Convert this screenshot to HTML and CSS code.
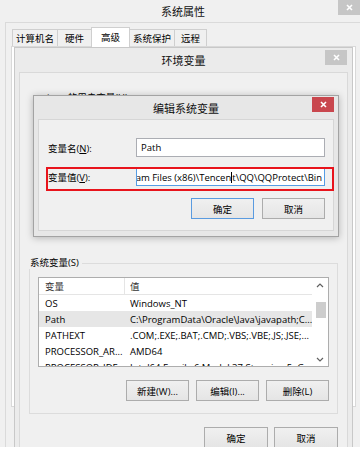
FILE: index.html
```html
<!DOCTYPE html>
<html lang="zh-CN">
<head>
    <meta charset="UTF-8">
    <title>系统属性</title>
    <link rel="stylesheet" href="styles.css">
</head>
<body>
<div class="sys-window">
    <div class="titlebar">
        <span class="title">系统属性</span>
        <span class="close sys-close"><svg width="7" height="7" viewBox="0 0 7 7"><path d="M1 1L6 6M6 1L1 6" stroke="#fff" stroke-width="1.6"/></svg></span>
    </div>
    <div class="sys-client">
        <div class="tabs">
            <div class="tab w45">计算机名</div>
            <div class="tab w35">硬件</div>
            <div class="tab active">高级</div>
            <div class="tab w46">系统保护</div>
            <div class="tab w33">远程</div>
        </div>
        <div class="tab-panel"></div>
    </div>

    <!-- 环境变量 -->
    <div class="env-dialog">
        <div class="dlg-title">
            <span class="title">环境变量</span>
            <span class="close env-close"><svg width="7" height="7" viewBox="0 0 7 7"><path d="M1 1L6 6M6 1L1 6" stroke="#fff" stroke-width="1.6"/></svg></span>
        </div>
        <div class="env-client">
            <div class="user-section">
                <div class="user-label">ivan 的用户变量(U)</div>
            </div>
            <div class="group">
                <div class="legend">系统变量(S)</div>
                <div class="listview">
                    <div class="lv-table">
                        <div class="lv-row lv-head">
                            <div class="c1">变量</div>
                            <div class="c2">值</div>
                        </div>
                        <div class="lv-row">
                            <div class="c1">OS</div>
                            <div class="c2">Windows_NT</div>
                        </div>
                        <div class="lv-row selected">
                            <div class="c1">Path</div>
                            <div class="c2">C:\ProgramData\Oracle\Java\javapath;C...</div>
                        </div>
                        <div class="lv-row">
                            <div class="c1">PATHEXT</div>
                            <div class="c2">.COM;.EXE;.BAT;.CMD;.VBS;.VBE;.JS;.JSE;...</div>
                        </div>
                        <div class="lv-row">
                            <div class="c1">PROCESSOR_AR...</div>
                            <div class="c2">AMD64</div>
                        </div>
                        <div class="lv-row">
                            <div class="c1">PROCESSOR_IDE...</div>
                            <div class="c2">Intel64 Family 6 Model 37 Stepping 5, G...</div>
                        </div>
                    </div>
                    <div class="scrollbar">
                        <svg class="arrow" width="8" height="5" viewBox="0 0 8 5"><path d="M1 4L4 1L7 4" fill="none" stroke="#606060" stroke-width="1.2"/></svg>
                        <div class="track"><div class="thumb"></div></div>
                        <svg class="arrow" width="8" height="5" viewBox="0 0 8 5"><path d="M1 1L4 4L7 1" fill="none" stroke="#606060" stroke-width="1.2"/></svg>
                    </div>
                </div>
                <div class="btn-row group-btns">
                    <div class="btn w63">新建(W)...</div>
                    <div class="btn w63">编辑(I)...</div>
                    <div class="btn w63">删除(L)</div>
                </div>
            </div>
            <div class="btn-row env-btns">
                <div class="btn w64">确定</div>
                <div class="btn w64">取消</div>
            </div>
        </div>
    </div>

    <!-- 编辑系统变量 -->
    <div class="edit-dialog">
        <div class="dlg-title edit-title">
            <span class="title">编辑系统变量</span>
            <span class="close red"><svg width="7" height="7" viewBox="0 0 7 7"><path d="M1 1L6 6M6 1L1 6" stroke="#fff" stroke-width="1.6"/></svg></span>
        </div>
        <div class="edit-client">
            <div class="field">
                <label class="field-label">变量名(<u>N</u>):</label>
                <div class="input">Path</div>
            </div>
            <div class="field field-value">
                <label class="field-label">变量值(<u>V</u>):</label>
                <div class="input focused"><span class="scroll-text">C:\Program Files (x86)\Tencen<span class="caret"></span>t\QQ\QQProtect\Bin</span></div>
            </div>
            <div class="btn-row edit-btns">
                <div class="btn w63 default">确定</div>
                <div class="btn w63">取消</div>
            </div>
        </div>
        <div class="mark"></div>
    </div>
</div>
</body>
</html>
```

FILE: styles.css
```css
* {
    box-sizing: border-box;
}
body {
    margin: 0;
    width: 360px;
    height: 453px;
    overflow: hidden;
    background: #fff;
    font-family: "Open Sans", "Noto Sans CJK SC", sans-serif;
    font-size: 9.5px;
    color: #000;
}
.sys-window {
    position: relative;
    height: 447px;
    background: #f0f0f0;
    overflow: hidden;
}
.titlebar {
    height: 22px;
    display: flex;
    justify-content: center;
    align-items: center;
    padding-left: 6px;
}
.title {
    font-size: 11px;
    color: #111;
}
.close {
    position: absolute;
    width: 22px;
    height: 15px;
    display: flex;
    align-items: center;
    justify-content: center;
    background: #c6c6c6;
}
.close svg {
    display: block;
}
.sys-close {
    top: 0;
    right: 0;
}
.close.red {
    top: 1px;
    right: 4px;
    background: #c9474e;
}
.sys-client {
    margin-left: 5px;
    height: 425px;
    border-left: 1px solid #dadada;
    border-top: 1px solid #dadada;
}
.tabs {
    display: flex;
    align-items: flex-start;
    height: 23px;
    padding: 4px 0 0 6px;
}
.tab {
    height: 17px;
    margin-top: 2px;
    margin-right: -1px;
    border: 1px solid #cfcfcf;
    border-bottom: none;
    background: #f0f0f0;
    display: flex;
    align-items: center;
    justify-content: center;
    white-space: nowrap;
}
.tab.active {
    position: relative;
    z-index: 1;
    width: 39px;
    height: 20px;
    margin-top: 0;
    margin-bottom: -1px;
    background: #fff;
    align-items: flex-start;
    padding-top: 2px;
}
.w45 { width: 46px; }
.w35 { width: 35px; }
.w46 { width: 46px; }
.w33 { width: 33px; }
.tab-panel {
    margin-left: 5px;
    width: 345px;
    height: 361px;
    background: #fff;
    border: 1px solid #d9d9d9;
}

/* dialogs */
.env-dialog {
    position: absolute;
    left: 14px;
    top: 47px;
    width: 339px;
    height: 410px;
    background: #ebebeb;
    border: 1px solid #c8c8c8;
}
.dlg-title {
    height: 24px;
    display: flex;
    align-items: center;
    justify-content: center;
}
.env-close {
    top: 2px;
    right: 5px;
}
.env-client {
    margin: 0 4px;
    height: 390px;
    background: #f0f0f0;
    border: 1px solid #d9d9d9;
    border-bottom: none;
    padding: 0 9px;
}
.user-section {
    height: 190px;
    padding-top: 19px;
}
.user-label {
    line-height: 12px;
    padding-left: 18px;
}
.group {
    border: 1px solid #dcdcdc;
    padding: 0 8px 12px;
}
.legend {
    width: max-content;
    margin: -7px 0 0 -9px;
    padding: 0 3px 0 1px;
    line-height: 12px;
    background: #f0f0f0;
}
.listview {
    display: flex;
    margin-top: 8px;
    width: 291px;
    height: 90px;
    border: 1px solid #adadad;
    background: #fff;
    overflow: hidden;
}
.lv-table {
    flex: 1;
    min-width: 0;
}
.lv-row {
    display: flex;
    height: 16px;
    align-items: center;
    white-space: nowrap;
}
.lv-row .c1 {
    width: 86px;
    padding-left: 6px;
    overflow: hidden;
}
.lv-row .c2 {
    flex: 1;
    padding-left: 5px;
    overflow: hidden;
}
.lv-head {
    height: 17px;
    border-bottom: 1px solid #e5e5e5;
    color: #333;
}
.lv-head .c1 {
    height: 100%;
    display: flex;
    align-items: center;
    border-right: 1px solid #e5e5e5;
}
.lv-row.selected {
    background: #e6e6e6;
}
.scrollbar {
    width: 16px;
    display: flex;
    flex-direction: column;
    align-items: center;
    padding: 5px 0 4px;
    background: #fff;
}
.track {
    flex: 1;
    width: 100%;
    padding: 14px 2px 0 4px;
}
.thumb {
    height: 16px;
    background: #cdcdcd;
}
.btn-row {
    display: flex;
    justify-content: flex-end;
}
.btn {
    height: 21px;
    border: 1px solid #acacac;
    background: linear-gradient(#f0f0f0, #e5e5e5);
    display: flex;
    align-items: center;
    justify-content: center;
    white-space: nowrap;
}
.btn.default {
    border-color: #5a9be0;
}
.w63 { width: 63px; }
.w64 { width: 64px; }
.group-btns {
    margin-top: 13px;
    gap: 7px;
}
.env-btns {
    margin-top: 13px;
    gap: 6px;
}

/* edit dialog */
.edit-dialog {
    position: absolute;
    left: 33px;
    top: 95px;
    width: 306px;
    height: 142px;
    background: #e7e7e7;
    border: 1px solid #a3a3a3;
    box-shadow: 0 1px 7px rgba(0, 0, 0, 0.25);
}
.edit-title {
    height: 23px;
}
.edit-client {
    margin: 0 4px;
    height: 112px;
    background: #f0f0f0;
    border: 1px solid #d6d6d6;
    padding: 18px 8px 0 9px;
}
.field {
    display: flex;
    align-items: center;
    height: 19px;
}
.field-label {
    width: 88px;
}
.input {
    width: 189px;
    height: 100%;
    border: 1px solid #abadb3;
    background: #fff;
    padding: 0 4px;
    display: flex;
    align-items: center;
    white-space: nowrap;
    overflow: hidden;
}
.field-value {
    margin-top: 11px;
    height: 18px;
}
.input.focused {
    border-color: #569de5;
    justify-content: flex-end;
    padding-right: 2px;
}
.scroll-text {
    flex-shrink: 0;
}
.caret {
    display: inline-block;
    width: 0;
    height: 11px;
    border-left: 1px solid #000;
    vertical-align: -2px;
}
.edit-btns {
    margin-top: 12px;
    gap: 8px;
}
.mark {
    position: absolute;
    left: 12px;
    top: 71px;
    width: 288px;
    height: 24px;
    border: 2px solid #e8141c;
}
```
